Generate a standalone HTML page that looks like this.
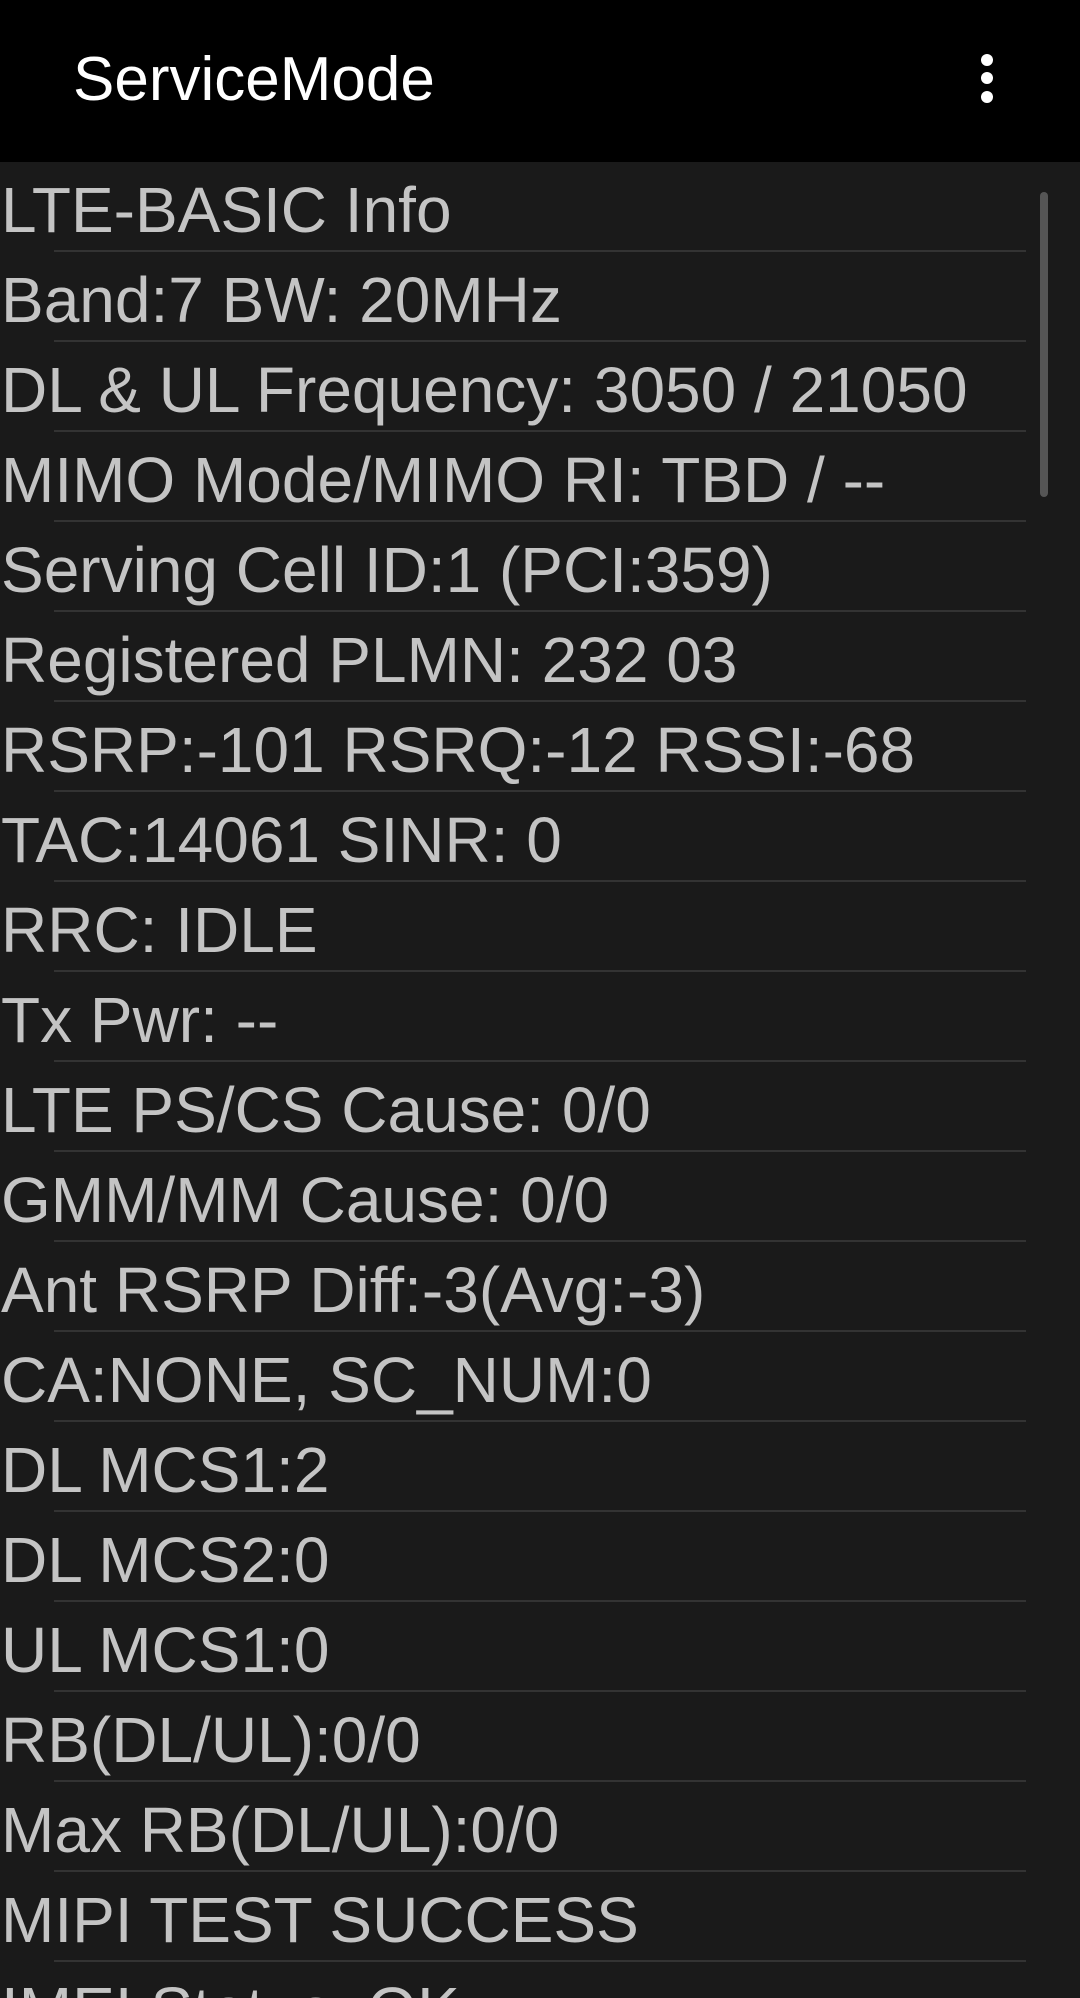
<!DOCTYPE html>
<html><head><meta charset="utf-8"><style>
html,body{margin:0;padding:0;width:1080px;height:1998px;overflow:hidden;background:#1a1a1a;font-family:"Liberation Sans",sans-serif;}
.wrap{position:relative;width:1080px;height:1998px;overflow:hidden;}
.hdr{position:absolute;left:0;top:0;width:1080px;height:162px;background:#000;}
.title{position:absolute;left:73px;top:45px;font-size:62px;color:#fff;line-height:70px;}
.dot{position:absolute;left:981px;width:12px;height:12px;border-radius:6px;background:#fff;}
.row{position:absolute;left:0;width:1080px;height:90px;}
.row span{position:absolute;left:1px;top:12px;font-size:64px;line-height:72px;color:#c4c4c4;white-space:nowrap;}
.row i{position:absolute;left:54px;top:88px;width:972px;height:2px;background:#333;}
.sb{position:absolute;left:1040px;top:192px;width:8px;height:305px;border-radius:4px;background:#555;}
</style></head><body><div class="wrap">
<div class="hdr"><div class="title">ServiceMode</div>
<div class="dot" style="top:54px"></div><div class="dot" style="top:72px"></div><div class="dot" style="top:91px"></div></div>
<div class="row" style="top:162px"><span>LTE-BASIC Info</span><i></i></div>
<div class="row" style="top:252px"><span>Band:7 BW: 20MHz</span><i></i></div>
<div class="row" style="top:342px"><span>DL &amp; UL Frequency: 3050 / 21050</span><i></i></div>
<div class="row" style="top:432px"><span>MIMO Mode/MIMO RI: TBD / --</span><i></i></div>
<div class="row" style="top:522px"><span>Serving Cell ID:1 (PCI:359)</span><i></i></div>
<div class="row" style="top:612px"><span>Registered PLMN: 232 03</span><i></i></div>
<div class="row" style="top:702px"><span>RSRP:-101 RSRQ:-12 RSSI:-68</span><i></i></div>
<div class="row" style="top:792px"><span>TAC:14061 SINR: 0</span><i></i></div>
<div class="row" style="top:882px"><span>RRC: IDLE</span><i></i></div>
<div class="row" style="top:972px"><span>Tx Pwr: --</span><i></i></div>
<div class="row" style="top:1062px"><span>LTE PS/CS Cause: 0/0</span><i></i></div>
<div class="row" style="top:1152px"><span>GMM/MM Cause: 0/0</span><i></i></div>
<div class="row" style="top:1242px"><span>Ant RSRP Diff:-3(Avg:-3)</span><i></i></div>
<div class="row" style="top:1332px"><span>CA:NONE, SC_NUM:0</span><i></i></div>
<div class="row" style="top:1422px"><span>DL MCS1:2</span><i></i></div>
<div class="row" style="top:1512px"><span>DL MCS2:0</span><i></i></div>
<div class="row" style="top:1602px"><span>UL MCS1:0</span><i></i></div>
<div class="row" style="top:1692px"><span>RB(DL/UL):0/0</span><i></i></div>
<div class="row" style="top:1782px"><span>Max RB(DL/UL):0/0</span><i></i></div>
<div class="row" style="top:1872px"><span>MIPI TEST SUCCESS</span><i></i></div>
<div class="row" style="top:1962px"><span>IMEI Status: OK</span><i></i></div>
<div class="sb"></div>
</div></body></html>
